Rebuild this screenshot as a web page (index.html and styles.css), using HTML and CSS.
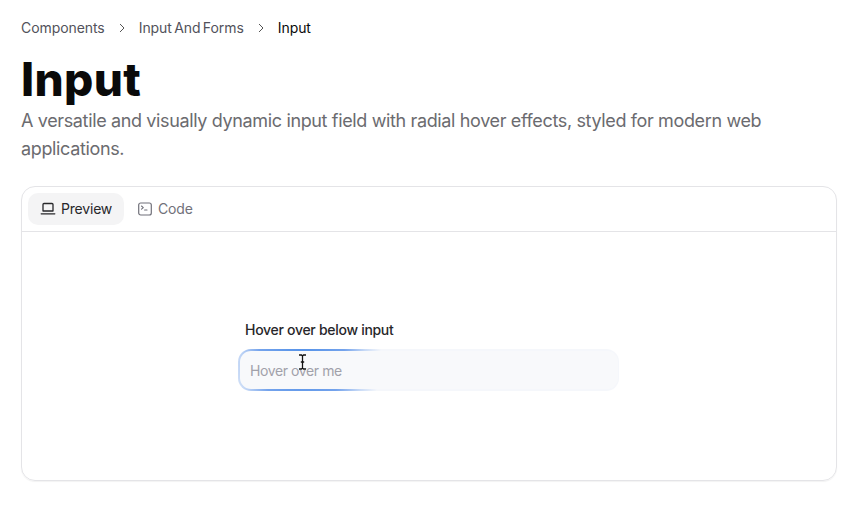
FILE: index.html
```html
<!DOCTYPE html>
<html lang="en">
<head>
<meta charset="utf-8">
<title>Input</title>
<link rel="stylesheet" href="styles.css">
</head>
<body>
<main class="page">
  <nav class="crumbs">
    <span class="crumb">Components</span>
    <svg class="chev" viewBox="0 0 10 10" width="10" height="10"><path d="M3 1l4 4-4 4" fill="none" stroke="#555" stroke-width="1"/></svg>
    <span class="crumb">Input And Forms</span>
    <svg class="chev" viewBox="0 0 10 10" width="10" height="10"><path d="M3 1l4 4-4 4" fill="none" stroke="#555" stroke-width="1"/></svg>
    <span class="crumb current">Input</span>
  </nav>
  <h1 class="title">Input</h1>
  <p class="lead">A versatile and visually dynamic input field with radial hover effects, styled for modern web applications.</p>
  <section class="card">
    <div class="tabs">
      <div class="tab active">
        <svg viewBox="0 0 16 16" width="16" height="16"><path d="M3 3.5a1 1 0 0 1 1-1h8a1 1 0 0 1 1 1V10H3z M1.2 12.8h13.6" fill="none" stroke="#27272a" stroke-width="1.3" stroke-linecap="round" stroke-linejoin="round"/></svg>
        <span>Preview</span>
      </div>
      <div class="tab">
        <svg viewBox="0 0 16 16" width="16" height="16"><rect x="1.7" y="2" width="12.6" height="12" rx="2" fill="none" stroke="#71717a" stroke-width="1.2"/><path d="M4.5 5l1.8 1.6-1.8 1.6M7.6 9h2.4" fill="none" stroke="#71717a" stroke-width="1.1" stroke-linecap="round" stroke-linejoin="round"/></svg>
        <span>Code</span>
      </div>
    </div>
    <div class="stage">
      <div class="form">
        <label class="label" for="hover">Hover over below input</label>
        <div class="glow">
          <input class="field" id="hover" placeholder="Hover over me">
          <svg class="cursor" viewBox="0 0 9 16" width="9" height="16"><path d="M1 1h2.5l1 1 1-1H8M4.5 2v12M1 15h2.5l1-1 1 1H8M2.6 8h3.8" fill="none" stroke="#fff" stroke-width="2.6"/><path d="M1 1h2.5l1 1 1-1H8M4.5 2v12M1 15h2.5l1-1 1 1H8M2.8 8h3.4" fill="none" stroke="#111" stroke-width="1.3"/></svg>
        </div>
      </div>
    </div>
  </section>
</main>
</body>
</html>
```
FILE: styles.css
```css
* { box-sizing: border-box; }
html, body { margin: 0; background: #fff; }
body { font-family: Inter, "Noto Sans", sans-serif; color: #09090b; }
.page { width: 864px; height: 506px; padding: 18px 27px 0 21px; overflow: hidden; }
.crumbs { display: flex; align-items: center; height: 20px; font-size: 14px; line-height: 20px; letter-spacing: -0.07px; word-spacing: -1.5px; color: #52525b; }
.crumb { white-space: nowrap; }
.current { color: #09090b; }
.chev { margin: 0 12px; flex: none; }
.title { margin: 14px 0 0; font-size: 46px; line-height: 55px; font-weight: 800; letter-spacing: 0.35px; color: #0a0a0a; }
.lead { margin: 0; font-size: 18px; line-height: 28px; letter-spacing: -0.36px; color: #6b6b6f; }
.card { margin-top: 23px; height: 295px; border: 1px solid #e4e4e7; border-radius: 14px; box-shadow: 0 1px 1px rgba(0,0,0,.05); display: flex; flex-direction: column; }
.tabs { display: flex; height: 45px; padding: 6px; border-bottom: 1px solid #e4e4e7; gap: 1px; flex: none; }
.tab { display: flex; align-items: center; gap: 5px; height: 32px; padding: 0 12px; border-radius: 10px; font-size: 14px; letter-spacing: -0.2px; color: #71717a; }
.tab span { margin-top: -2px; }
.tab.active { background: #f4f4f5; color: #27272a; }
.stage { flex: 1; padding: 88px 0 0 216px; }
.form { width: 381px; display: flex; flex-direction: column; gap: 9px; }
.label { padding-left: 7px; font-size: 14px; line-height: 20px; font-weight: 500; letter-spacing: -0.29px; color: #27272a; }
.glow { position: relative; width: 381px; height: 42px; padding: 2px 1.5px; border-radius: 13px; background: radial-gradient(80px circle at 64px 13px, #4f8fe8 0%, #74a3ec 55%, #c8daf6 80%, #f5f7fb 100%), #f7f8fa; }
.field { display: block; width: 100%; height: 38px; padding: 0 10.5px; border: 0; outline: 0; border-radius: 11px; background: #f8f9fb; font: 14px Inter, "Noto Sans", sans-serif; letter-spacing: -0.4px; }
.field::placeholder { color: #a1a1aa; opacity: 1; }
.cursor { position: absolute; left: 60px; top: 5px; }
```
